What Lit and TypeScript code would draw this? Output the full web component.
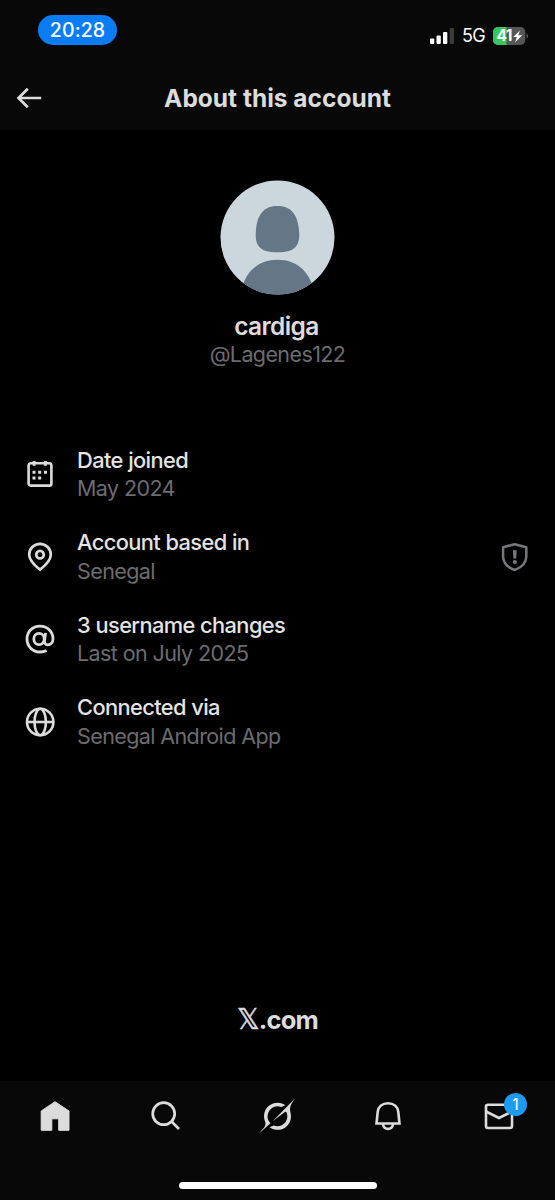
import { LitElement, html, svg, css } from "lit";
import { customElement } from "lit/decorators.js";

const calendar = svg`<g fill="none" stroke="currentColor" stroke-width="2.6">
  <rect x="3.6" y="4.2" width="22.8" height="22.4" rx="2.2"/></g>
  <path fill="currentColor" d="M7.6 1.9h3v4.8h-3zM18.9 1.9h3v4.8h-3zM7.5 11.8h3v3h-3zM13.2 11.8h3v3h-3zM19 11.8h3v3h-3zM7.5 17.6h3v3h-3zM13.2 17.6h3v3h-3z"/>`;
const pin = svg`<g fill="none" stroke="currentColor" stroke-width="2.7">
  <path d="M15 27.6C11.4 24.8 4.2 19.3 4.2 12.7A10.8 10.8 0 0 1 25.8 12.7C25.8 19.3 18.6 24.8 15 27.6z"/>
  <circle cx="15" cy="12.7" r="3.8"/></g>`;
const at = svg`<g fill="none" stroke="currentColor" stroke-width="2.8">
  <ellipse cx="14" cy="15" rx="5.2" ry="5.6"/>
  <path d="M20.600 8.900l-1.100 7.800c-.3 2.600 1 4.100 3.200 4.100 3.200 0 5.300-2.500 5.300-6C28 7.400 22.200 2.100 14.900 2.100 7.700 2.100 2 7.800 2 15s5.600 13 12.900 13c2.500 0 4.700-.5 6.700-1.600"/></g>`;
const globe = svg`<g fill="none" stroke="currentColor" stroke-width="2.6">
  <circle cx="15.200" cy="15" r="13.2"/><ellipse cx="15.200" cy="15" rx="5.700" ry="13.200"/><path d="M2 15h26.400"/></g>`;

@customElement("info-row")
class InfoRow extends LitElement {
  static properties = { icon: {}, label: {}, value: {}, shield: { type: Boolean } };
  declare icon: unknown;
  declare label: string;
  declare value: string;
  declare shield: boolean;
  static styles = css`
    :host { display: flex; align-items: center; height: 57px; }
    .icon { width: 30px; height: 30px; color: #dcdcdc; flex: none; }
    .text { flex: 1; margin-left: 22px; font-size: 21.8px; line-height: 28.5px; white-space: nowrap; }
    .label { color: #e4e4e4; font-weight: 500; letter-spacing: -0.6px; word-spacing: 0.2px; }
    .value { color: #6b6c70; font-size: 21.500px; letter-spacing: -0.6px; }
    .shield { width: 30px; height: 30px; color: #77787c; flex: none; }
  `;
  render() {
    return html`
      <svg class="icon" viewBox="0 0 30 30">${this.icon}</svg>
      <div class="text"><div class="label">${this.label}</div><div class="value">${this.value}</div></div>
      ${this.shield
        ? html`<svg class="shield" viewBox="0 0 30 30">
            <path fill="none" stroke="currentColor" stroke-width="2.5" stroke-linejoin="round" d="M14.700 2.200L26.300 5.200V14.500C26.300 21.500 21.200 25.500 14.700 28C8.200 25.500 3.100 21.500 3.100 14.500V5.200z"/>
            <path fill="currentColor" d="M12.900 8.200h3.800l-.5 8.200h-2.800z"/><circle fill="currentColor" cx="14.800" cy="20" r="2.100"/>
          </svg>`
        : null}`;
  }
}

@customElement("app-root")
class AppRoot extends LitElement {
  static styles = css`
    :host { display: flex; flex-direction: column; width: 555px; height: 1200px; background: #000; color: #dcdcdc; font-family: Inter, "Noto Sans", sans-serif; overflow: hidden; }
    .top { height: 130px; background: #080808; flex: none; }
    .status { display: flex; justify-content: space-between; height: 68px; padding: 15px 26px 0 38px; box-sizing: border-box; }
    .clock { width: 79px; height: 30px; border-radius: 15px; background: #0a7cf6; color: #fff; font-size: 19.500px; font-weight: 500; line-height: 31px; text-align: center; letter-spacing: 0.1px; }
    .right { display: flex; align-items: center; height: 41px; color: #fff; }
    .bars { width: 25px; height: 18px; }
    .net { font-size: 18px; margin: 0 7px 0 7px; width: 24px; letter-spacing: -0.7px; line-height: 20px; }
    .battery { position: relative; width: 36px; height: 18px; }
    .battery svg { display: block; }
    .pct { position: absolute; left: 3.500px; top: 0; font-size: 15.500px; font-weight: 700; line-height: 18px; letter-spacing: -0.700px; }
    .bar { display: grid; grid-template-columns: 60px 1fr 60px; align-items: center; height: 60px; }
    .back { width: 28px; height: 24px; margin-left: 16px; display: block; }
    h1 { margin: 0; font-size: 24.500px; line-height: 30px; font-weight: 700; text-align: center; white-space: nowrap; }
    main { flex: 1; display: flex; flex-direction: column; }
    .profile { display: flex; flex-direction: column; align-items: center; padding-top: 50px; }
    .avatar { width: 115px; height: 115px; display: block; }
    .name { margin-top: 16px; margin-right: 2px; font-size: 24.500px; font-weight: 600; line-height: 30px; letter-spacing: -0.600px; }
    .handle { margin-top: -1px; font-size: 21.500px; line-height: 28px; color: #6b6c70; letter-spacing: -0.600px; }
    .rows { display: flex; flex-direction: column; gap: 25.500px; padding: 77.500px 25px 0; }
    .brand { margin-top: auto; height: 34px; padding-bottom: 44px; display: flex; justify-content: center; align-items: center; font-size: 25.500px; font-weight: 700; line-height: 34px; letter-spacing: -0.800px; }
    .x { font-family: "DejaVu Sans", sans-serif; font-weight: 400; font-size: 28px; -webkit-text-stroke: 0.600px #dcdcdc; }
    nav { height: 119px; flex: none; background: #080808; display: flex; flex-direction: column; align-items: center; }
    .tabs { display: grid; grid-template-columns: repeat(5, 1fr); width: 554px; margin-right: 1px; height: 70px; align-items: center; justify-items: center; }
    .tab { position: relative; width: 36px; height: 36px; }
    .tab svg { display: block; }
    .badge { position: absolute; left: 23.500px; top: -5px; width: 23px; height: 23px; border-radius: 50%; background: #1d9bf0; color: #fff; font-size: 16px; line-height: 23px; text-align: center; }
    .home { width: 198px; height: 7px; border-radius: 4px; background: #fff; margin-top: 31px; }
  `;
  render() {
    return html`
      <div class="top">
        <div class="status">
          <div class="clock">20:28</div>
          <div class="right">
            <svg class="bars" viewBox="0 0 25 18"><g fill="#fff"><rect x="0" y="11.500" width="4.300" height="5.500" rx="1"/><rect x="6.500" y="8.500" width="4.300" height="8.500" rx="1"/><rect x="13" y="5" width="4.300" height="12" rx="1"/></g><rect x="19.700" y="1" width="4.300" height="16" rx="1" fill="#3b3b3b"/></svg>
            <span class="net">5G</span>
            <div class="battery">
              <svg width="36" height="18" viewBox="0 0 36 18">
                <rect width="32.300" height="18" rx="5" fill="#565656"/>
                <path d="M13.500 0H5a5 5 0 0 0-5 5v8a5 5 0 0 0 5 5h8.500z" fill="#34c759"/>
                <path d="M33.500 6.500c2 .7 2 4.300 0 5z" fill="#565656"/>
                <path d="M27 3.500l-6.800 6.500h3.700l-1.900 5.500 7.200-7.200h-4z" fill="#fff"/>
              </svg>
              <span class="pct">41</span>
            </div>
          </div>
        </div>
        <div class="bar">
          <svg class="back" viewBox="0 0 28 24"><path d="M11.800 2.700L2.500 12l9.300 9.300M2.500 12H25.200" fill="none" stroke="#dcdcdc" stroke-width="2.700"/></svg>
          <h1>About this account</h1>
        </div>
      </div>
      <main>
        <div class="profile">
          <svg class="avatar" viewBox="0 0 115 115">
            <defs><clipPath id="disc"><circle cx="57.500" cy="57.500" r="57"/></clipPath></defs>
            <g clip-path="url(#disc)"><rect width="115" height="115" fill="#ccd6dd"/>
            <path fill="#657786" d="M57.500 26C70 26 77.500 33 79 50C80.500 65 76 72.300 57.500 72.300S34.500 65 36 50C37.500 33 45 26 57.500 26z"/>
            <path fill="#657786" d="M20 115C24 93 37 79.800 57.500 79.800S91 93 95 115z"/></g>
          </svg>
          <div class="name">cardiga</div>
          <div class="handle">@Lagenes122</div>
        </div>
        <div class="rows">
          <info-row .icon=${calendar} .label=${"Date joined"} .value=${"May 2024"}></info-row>
          <info-row .icon=${pin} .label=${"Account based in"} .value=${"Senegal"} .shield=${true}></info-row>
          <info-row .icon=${at} .label=${"3 username changes"} .value=${"Last on July 2025"}></info-row>
          <info-row .icon=${globe} .label=${"Connected via"} .value=${"Senegal Android App"}></info-row>
        </div>
        <div class="brand"><span class="x">𝕏</span><span>.com</span></div>
      </main>
      <nav>
        <div class="tabs">
          <div class="tab"><svg width="36" height="36" viewBox="0 0 36 36"><path fill="#dcdcdc" stroke="#dcdcdc" stroke-linejoin="round" d="M18 3.700L32 13V32.300H21.700V20.800H14.800V32.300H4.200V13z"/></svg></div>
          <div class="tab"><svg width="36" height="36" viewBox="0 0 36 36"><g fill="none" stroke="#dcdcdc" stroke-width="2.700"><circle cx="15.700" cy="15.700" r="11"/><path d="M23.500 23.500l7.500 7.500"/></g></svg></div>
          <div class="tab"><svg width="36" height="36" viewBox="0 0 33 32"><path fill="#dcdcdc" d="M12.745 20.540l10.970-8.190c.539-.4 1.307-.244 1.564.38 1.349 3.288.746 7.241-1.938 9.955-2.683 2.714-6.417 3.310-9.830 1.954l-3.728 1.745c5.347 3.697 11.840 2.782 15.898-1.324 3.219-3.255 4.216-7.692 3.284-11.693l.008.009c-1.351-5.878.332-8.227 3.782-13.031L33 0l-4.540 4.590v-.014L12.743 20.544m-2.263 1.987c-3.837-3.707-3.175-9.446.1-12.755 2.420-2.449 6.388-3.448 9.852-1.979l3.720-1.737c-.67-.49-1.530-1.017-2.515-1.387-4.455-1.854-9.789-.931-13.410 2.728-3.483 3.523-4.579 8.940-2.697 13.561 1.405 3.454-.899 5.898-3.220 8.364C1.490 30.200.666 31.074 0 32l10.478-9.466"/></svg></div>
          <div class="tab"><svg width="36" height="36" viewBox="0 0 36 36"><g fill="none" stroke="#dcdcdc" stroke-width="2.600"><path d="M6.500 25.500L7.700 14C8.300 8.500 12.500 5.200 18 5.200S27.700 8.500 28.300 14L29.500 25.500z"/><path d="M12.800 26c.7 3.200 2.700 4.900 5.200 4.900s4.500-1.700 5.200-4.900"/></g></svg></div>
          <div class="tab"><svg width="36" height="36" viewBox="0 0 36 36"><g fill="none" stroke="#dcdcdc" stroke-width="2.600"><rect x="5" y="6.800" width="26" height="23.200" rx="2"/><path d="M5 13.500l13 6.500 13-6.500"/></g></svg><span class="badge">1</span></div>
        </div>
        <div class="home"></div>
      </nav>`;
  }
}
